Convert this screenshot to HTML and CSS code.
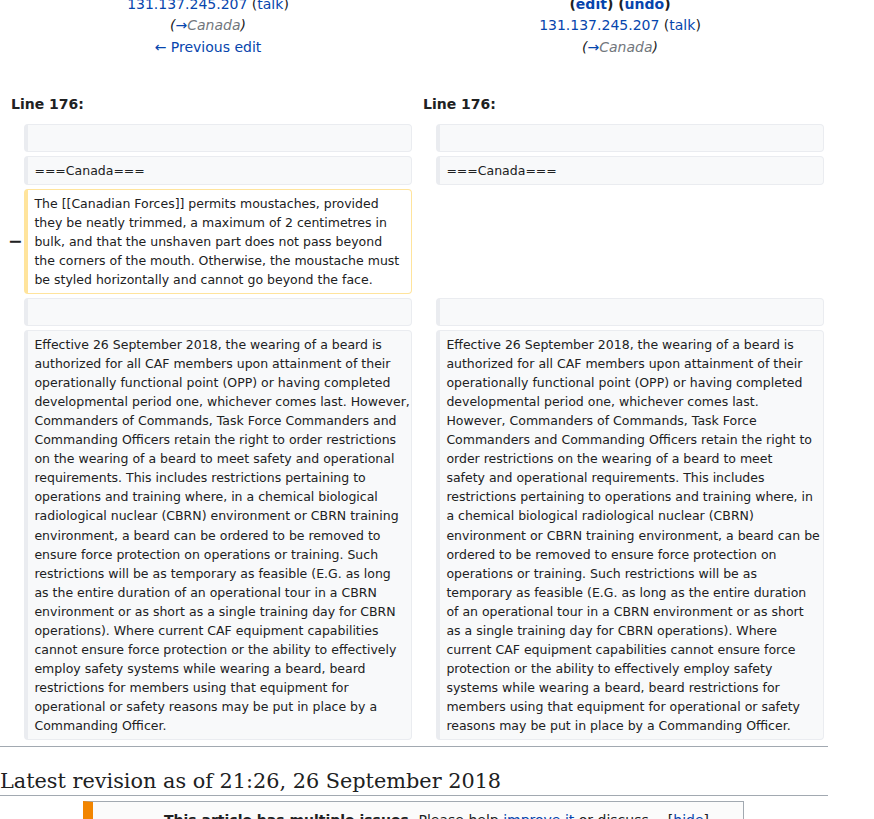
FILE: index.html
```html
<!DOCTYPE html>
<html lang="en">
<head>
<meta charset="utf-8">
<title>Diff</title>
<link rel="stylesheet" href="styles.css">
</head>
<body>
<div class="content">
  <table class="diff">
    <colgroup>
      <col class="col-marker">
      <col class="col-content">
      <col class="col-marker">
      <col class="col-content">
    </colgroup>
    <tr class="title-row">
      <td colspan="2" class="title">
        <div class="title-main">Revision as of 21:22, 26 September 2018 <span class="plain">(<a href="#">edit</a>)</span></div>
        <div><a href="#">131.137.245.207</a> (<a href="#">talk</a>)</div>
        <div class="comment">(<a href="#" class="arrow">→</a><span class="autocomment">Canada</span>)</div>
        <div><a href="#">← Previous edit</a></div>
      </td>
      <td colspan="2" class="title">
        <div class="title-main">Latest revision as of 21:26, 26 September 2018</div>
        <div class="title-main">(<a href="#">edit</a>) (<a href="#">undo</a>)</div>
        <div><a href="#">131.137.245.207</a> (<a href="#">talk</a>)</div>
        <div class="comment">(<a href="#" class="arrow">→</a><span class="autocomment">Canada</span>)</div>
      </td>
    </tr>
    <tr>
      <td colspan="2" class="lineno">Line 176:</td>
      <td colspan="2" class="lineno">Line 176:</td>
    </tr>
    <tr>
      <td class="marker"></td>
      <td class="context"><div><br></div></td>
      <td class="marker"></td>
      <td class="context"><div><br></div></td>
    </tr>
    <tr>
      <td class="marker"></td>
      <td class="context"><div>===Canada===</div></td>
      <td class="marker"></td>
      <td class="context"><div>===Canada===</div></td>
    </tr>
    <tr>
      <td class="marker">−</td>
      <td class="deleted"><div class="lines">The [[Canadian Forces]] permits moustaches, provided<br>they be neatly trimmed, a maximum of 2 centimetres in<br>bulk, and that the unshaven part does not pass beyond<br>the corners of the mouth. Otherwise, the moustache must<br>be styled horizontally and cannot go beyond the face.</div></td>
      <td colspan="2" class="empty"></td>
    </tr>
    <tr>
      <td class="marker"></td>
      <td class="context"><div><br></div></td>
      <td class="marker"></td>
      <td class="context"><div><br></div></td>
    </tr>
    <tr>
      <td class="marker"></td>
      <td class="context"><div class="lines">Effective 26 September 2018, the wearing of a beard is<br>authorized for all CAF members upon attainment of their<br>operationally functional point (OPP) or having completed<br>developmental period one, whichever comes last. However,<br>Commanders of Commands, Task Force Commanders and<br>Commanding Officers retain the right to order restrictions<br>on the wearing of a beard to meet safety and operational<br>requirements. This includes restrictions pertaining to<br>operations and training where, in a chemical biological<br>radiological nuclear (CBRN) environment or CBRN training<br>environment, a beard can be ordered to be removed to<br>ensure force protection on operations or training. Such<br>restrictions will be as temporary as feasible (E.G. as long<br>as the entire duration of an operational tour in a CBRN<br>environment or as short as a single training day for CBRN<br>operations). Where current CAF equipment capabilities<br>cannot ensure force protection or the ability to effectively<br>employ safety systems while wearing a beard, beard<br>restrictions for members using that equipment for<br>operational or safety reasons may be put in place by a<br>Commanding Officer.</div></td>
      <td class="marker"></td>
      <td class="context"><div class="lines">Effective 26 September 2018, the wearing of a beard is<br>authorized for all CAF members upon attainment of their<br>operationally functional point (OPP) or having completed<br>developmental period one, whichever comes last.<br>However, Commanders of Commands, Task Force<br>Commanders and Commanding Officers retain the right to<br>order restrictions on the wearing of a beard to meet<br>safety and operational requirements. This includes<br>restrictions pertaining to operations and training where, in<br>a chemical biological radiological nuclear (CBRN)<br>environment or CBRN training environment, a beard can be<br>ordered to be removed to ensure force protection on<br>operations or training. Such restrictions will be as<br>temporary as feasible (E.G. as long as the entire duration<br>of an operational tour in a CBRN environment or as short<br>as a single training day for CBRN operations). Where<br>current CAF equipment capabilities cannot ensure force<br>protection or the ability to effectively employ safety<br>systems while wearing a beard, beard restrictions for<br>members using that equipment for operational or safety<br>reasons may be put in place by a Commanding Officer.</div></td>
    </tr>
  </table>
  <hr class="diff-hr">
  <h2 class="current-title">Latest revision as of 21:26, 26 September 2018</h2>
  <div class="ambox">
    <div class="ambox-image"></div>
    <div class="ambox-text">
      <span class="toggle">[<a href="#">hide</a>]</span>
      <b>This article has multiple issues.</b> Please help <a href="#">improve it</a> or discuss these issues on the talk page.
    </div>
  </div>
</div>
</body>
</html>
```
FILE: styles.css
```css
html, body {
  margin: 0;
  padding: 0;
  background: #ffffff;
}
body {
  font-family: "DejaVu Sans", sans-serif;
  color: #202122;
  font-size: 14px;
}
a {
  color: #0645ad;
  text-decoration: none;
}
.content {
  width: 828px;
  margin-top: -32px;
}
.diff {
  width: 828px;
  table-layout: fixed;
  border-collapse: separate;
  border-spacing: 4px;
}
.col-marker { width: 2%; }
.col-content { width: 48%; }
.diff td {
  padding: 0;
}
.diff td.title {
  text-align: center;
  vertical-align: top;
  line-height: 21.7px;
  padding: 0 0 27px 0;
}
.title-main {
  font-weight: bold;
  white-space: nowrap;
}
.comment {
  font-style: italic;
}
.comment .arrow {
  font-style: normal;
}
.autocomment {
  color: #72777d;
}
.diff td.lineno {
  font-weight: bold;
  line-height: 21.7px;
  padding: 4px 7px;
}
.diff td.marker {
  font-weight: bold;
  font-size: 17.5px;
  text-align: left;
  padding-left: 4px;
  vertical-align: middle;
  white-space: nowrap;
}
.diff td.context,
.diff td.deleted {
  font-size: 12.5px;
  line-height: 19.05px;
  padding: 3.8px 0 3.8px 6.25px;
  border: 1px solid #eaecf0;
  border-left-width: 4px;
  border-radius: 4px;
  vertical-align: top;
  overflow: hidden;
}
.lines {
  white-space: nowrap;
}
.diff td.context {
  background: #f8f9fa;
}
.diff td.deleted {
  background: #ffffff;
  border-color: #ffe49c;
}
.diff-hr {
  height: 1px;
  background: #a2a9b1;
  border: 0;
  margin: 2px 0 0 0;
}
.current-title {
  font-family: "DejaVu Serif", serif;
  font-weight: normal;
  font-size: 20.8px;
  line-height: 1.3;
  margin: 21px 0 5.5px 0;
  padding: 0;
  border-bottom: 1px solid #a2a9b1;
}
.ambox {
  margin: 0 84px 0 83px;
  border: 1px solid #a2a9b1;
  border-left: 10px solid #f28500;
  background: #fbfbfb;
  display: flex;
  height: 60px;
}
.ambox-image {
  width: 52px;
  flex: none;
  padding: 2px 0 2px 7px;
}
.ambox-text {
  flex: 1;
  font-size: 14px;
  line-height: 22px;
  padding: 7px 34px 4px 12px;
}
.toggle {
  float: right;
  font-weight: normal;
  margin-left: 8px;
}
```
